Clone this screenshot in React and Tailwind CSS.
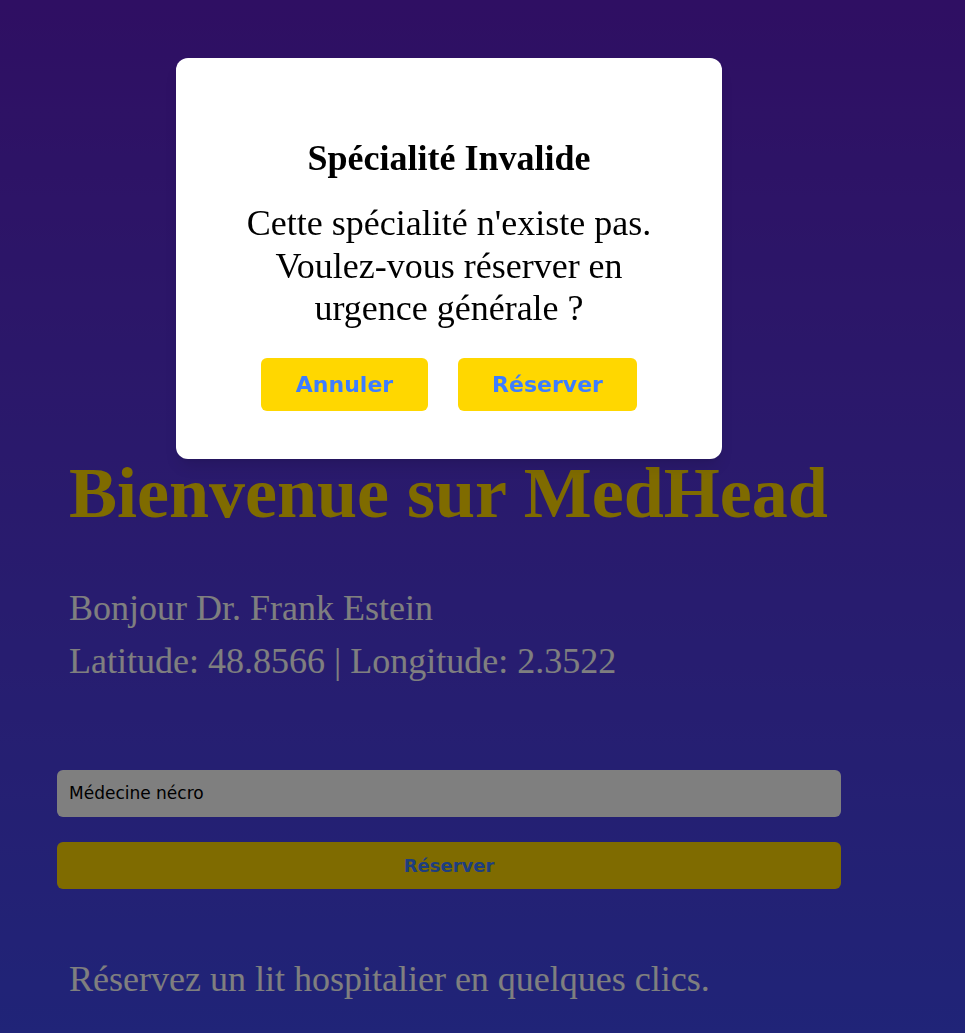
export default function App() {
  return (
    <div className="relative min-h-[1033px] w-full bg-gradient-to-b from-[#5e1ec6] to-[#4048f0] font-['Liberation_Serif',serif]">
      <div className="relative ml-[57px] w-[784px] pt-[452px]">
        <h1 className="px-3 text-[72px] font-bold leading-[1.15] text-[#ffd700]">Bienvenue sur MedHead</h1>
        <div className="mt-[47px] px-3 text-[36px] leading-[53px] text-white">
          <p>Bonjour Dr. Frank Estein</p>
          <p>Latitude: 48.8566 | Longitude: 2.3522</p>
        </div>
        <div className="mt-[82px] flex flex-col gap-[25px]">
          <input
            readOnly
            value="Médecine nécro"
            className="h-[47px] w-full rounded-md bg-white px-3 font-['DejaVu_Sans',sans-serif] text-[17px] text-black outline-none"
          />
          <button className="h-[47px] w-full rounded-md bg-[#ffd700] font-['DejaVu_Sans',sans-serif] text-[18px] font-bold text-[#3d7dff]">
            Réserver
          </button>
        </div>
        <p className="mt-[63px] px-3 text-[36px] text-white">Réservez un lit hospitalier en quelques clics.</p>
      </div>

      <div className="fixed inset-0 z-10 bg-black/50" />

      <div className="absolute left-[176px] top-[58px] z-20 flex w-[546px] flex-col items-center rounded-xl bg-white px-[50px] pb-[48px] pt-[78px] text-center text-black font-['Liberation_Serif',serif] shadow-lg">
        <h2 className="text-[36px] font-bold leading-[45px]">Spécialité Invalide</h2>
        <p className="mt-[21px] text-[36px] leading-[42.5px]">Cette spécialité n'existe pas. Voulez-vous réserver en urgence générale ?</p>
        <div className="mt-[28px] flex gap-[30px]">
          <button className="h-[53px] w-[167px] rounded-md bg-[#ffd700] font-['DejaVu_Sans',sans-serif] text-[22px] font-bold text-[#3d7dff]">Annuler</button>
          <button className="h-[53px] w-[179px] rounded-md bg-[#ffd700] font-['DejaVu_Sans',sans-serif] text-[22px] font-bold text-[#3d7dff]">Réserver</button>
        </div>
      </div>
    </div>
  );
}
